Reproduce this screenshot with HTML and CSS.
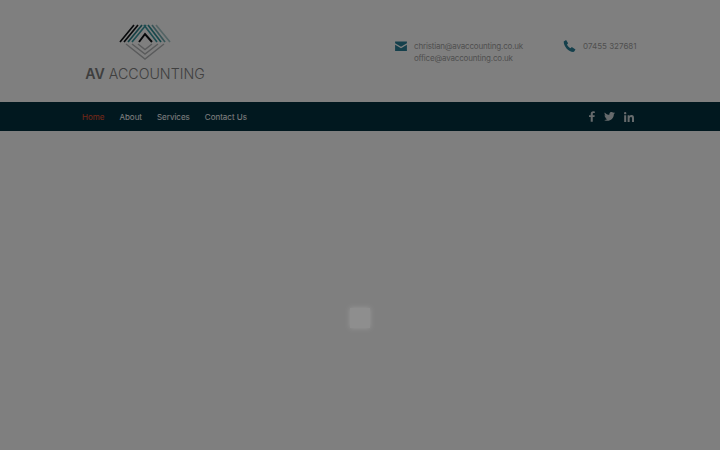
FILE: index.html
```html
<!DOCTYPE html>
<html>
<head>
    <title>AV Accounting</title>
    <link rel="stylesheet" href="styles.css">
</head>
<body>
    <header class="top">
        <div class="logo">
            <svg class="logo-mark" width="52" height="36" viewBox="0 0 52 36">
                <g fill="none" stroke-width="1.700">
                    <path d="M7 20 L26 35 L45 20 M13 20 L26 30 L39 20 M19 20 L26 25.500 L33 20" stroke="#b4b6b8" stroke-width="1.500"/>
                    <path d="M37 1 L51 18" stroke="#a9c8ca"/>
                    <path d="M33 1 L46 18" stroke="#6ea9ae"/>
                    <path d="M29 1 L42 18" stroke="#2d8f97"/>
                    <path d="M13 18 L27 1 M25 1 L38 18" stroke="#3c9aa2"/>
                    <path d="M9 18 L23 1" stroke="#2a7f88"/>
                    <path d="M1 18 L15 1 M5 18 L19 1" stroke="#111418"/>
                    <path d="M20 18 L26 10 L33 18" stroke="#0c1014" stroke-width="2"/>
                </g>
            </svg>
            <div class="logo-text"><b>AV</b> ACCOUNTING</div>
        </div>
        <div class="contact contact-mail">
            <svg width="12" height="10" viewBox="0 0 13 11">
                <path d="M0 0.500 H13 V2.400 L6.500 6.400 L0 2.400 Z M0 4 L6.500 8 L13 4 V11 H0 Z" fill="#2a8099"/>
            </svg>
            <div class="mail-list">
                <div>christian@avaccounting.co.uk</div>
                <div>office@avaccounting.co.uk</div>
            </div>
        </div>
        <div class="contact contact-phone">
            <svg width="13" height="12" viewBox="0 0 13 13">
                <path d="M2.800 0 L5 3.600 L3.800 5 C4.300 6.500 5.700 8 7.600 8.900 L9 7.700 L13 10.200 L11.400 12.800 C6.400 13.600 0.200 7.600 0.200 1.600 Z" fill="#2a8099"/>
            </svg>
            <div>07455 327681</div>
        </div>
    </header>
    <nav class="nav">
        <a class="active" href="#">Home</a>
        <a href="#">About</a>
        <a href="#">Services</a>
        <a href="#">Contact Us</a>
        <div class="social">
            <svg width="6" height="11" viewBox="0 0 7 12"><path d="M2 12 V6.700 H0 V4.600 H2 V3 C2 1 3.200 0 5 0 L6.800 0.100 V2 H5.600 C4.700 2 4.400 2.400 4.400 3.200 V4.600 H6.700 L6.400 6.700 H4.400 V12 Z" fill="#fff"/></svg>
            <svg width="11" height="9" viewBox="0 0 12 10"><path d="M12 1.200 C11.500 1.400 11 1.600 10.600 1.600 C11.100 1.300 11.500 0.800 11.700 0.200 C11.200 0.500 10.600 0.700 10.100 0.800 C9 -0.400 6.600 0 6 1.600 C5.800 2.100 5.800 2.600 5.900 3.100 C3.900 3 2 2 0.800 0.500 C0.100 1.600 0.500 3.100 1.500 3.800 C1.100 3.800 0.700 3.700 0.400 3.500 C0.400 4.700 1.300 5.700 2.400 5.900 C2 6 1.600 6 1.300 6 C1.600 7 2.600 7.700 3.600 7.700 C2.600 8.500 1.300 8.900 0 8.800 C5 11.700 11.100 8.300 10.800 2.500 C11.300 2.200 11.700 1.700 12 1.200 Z" fill="#fff"/></svg>
            <svg width="10" height="10" viewBox="0 0 11 11"><path d="M0.200 3.600 H2.400 V11 H0.200 Z M1.300 0 A1.300 1.300 0 1 1 1.300 2.600 A1.300 1.300 0 1 1 1.300 0 Z M4 3.600 H6.100 V4.600 C6.500 3.900 7.300 3.400 8.400 3.400 C10.400 3.400 11 4.700 11 6.600 V11 H8.800 V7.100 C8.800 6.100 8.500 5.400 7.600 5.400 C6.600 5.400 6.200 6.200 6.200 7.100 V11 H4 Z" fill="#fff"/></svg>
        </div>
    </nav>
    <div class="overlay">
        <div class="loader"></div>
    </div>
</body>
</html>
```

FILE: styles.css
```css
html, body {
    height: 100%;
}

body {
    margin: 0;
    font-family: 'Inter', 'Lato', Arial, sans-serif;
    background: #fff;
    color: #a0a0a0;
    overflow: hidden;
}

.top {
    display: flex;
    align-items: flex-start;
    height: 102px;
    box-sizing: border-box;
    padding: 24px 0 0 85px;
}

.logo {
    display: flex;
    flex-direction: column;
    align-items: center;
    width: 120px;
}

.logo-mark {
    display: block;
}

.logo-text {
    margin-top: 5px;
    font-size: 14.200px;
    font-weight: 300;
    line-height: 18px;
    white-space: nowrap;
    color: #808080;
}

.logo-text b {
    font-weight: 600;
    color: #7c7c7c;
}

.contact {
    display: flex;
    font-size: 8px;
    line-height: 12px;
    margin-top: 16px;
}

.contact svg {
    flex: none;
}

.mail-list {
    letter-spacing: -0.180px;
}

.contact-mail {
    margin-left: 190px;
    gap: 7px;
}

.contact-mail svg {
    margin-top: 1px;
}

.contact-phone {
    margin-left: 40px;
    gap: 7px;
}

.nav {
    display: flex;
    align-items: center;
    height: 29px;
    padding-left: 82px;
    padding-right: 86px;
    background: #03303e;
    font-size: 8px;
}

.nav a {
    color: #fff;
    text-decoration: none;
    margin-right: 15px;
}

.nav a.active {
    color: #e8522f;
}

.social {
    display: flex;
    align-items: center;
    gap: 9px;
    margin-left: auto;
    opacity: 0.8;
}

.overlay {
    position: fixed;
    top: 0;
    right: 0;
    bottom: 0;
    left: 0;
    display: flex;
    justify-content: center;
    align-items: flex-start;
    padding-top: 308px;
    box-sizing: border-box;
    background: rgba(0, 0, 0, 0.5);
    backdrop-filter: blur(0.5px);
}

.loader {
    width: 20px;
    height: 20px;
    background: #8e8e8e;
    box-shadow: 0 0 5px rgba(255, 255, 255, 0.2);
}
```
